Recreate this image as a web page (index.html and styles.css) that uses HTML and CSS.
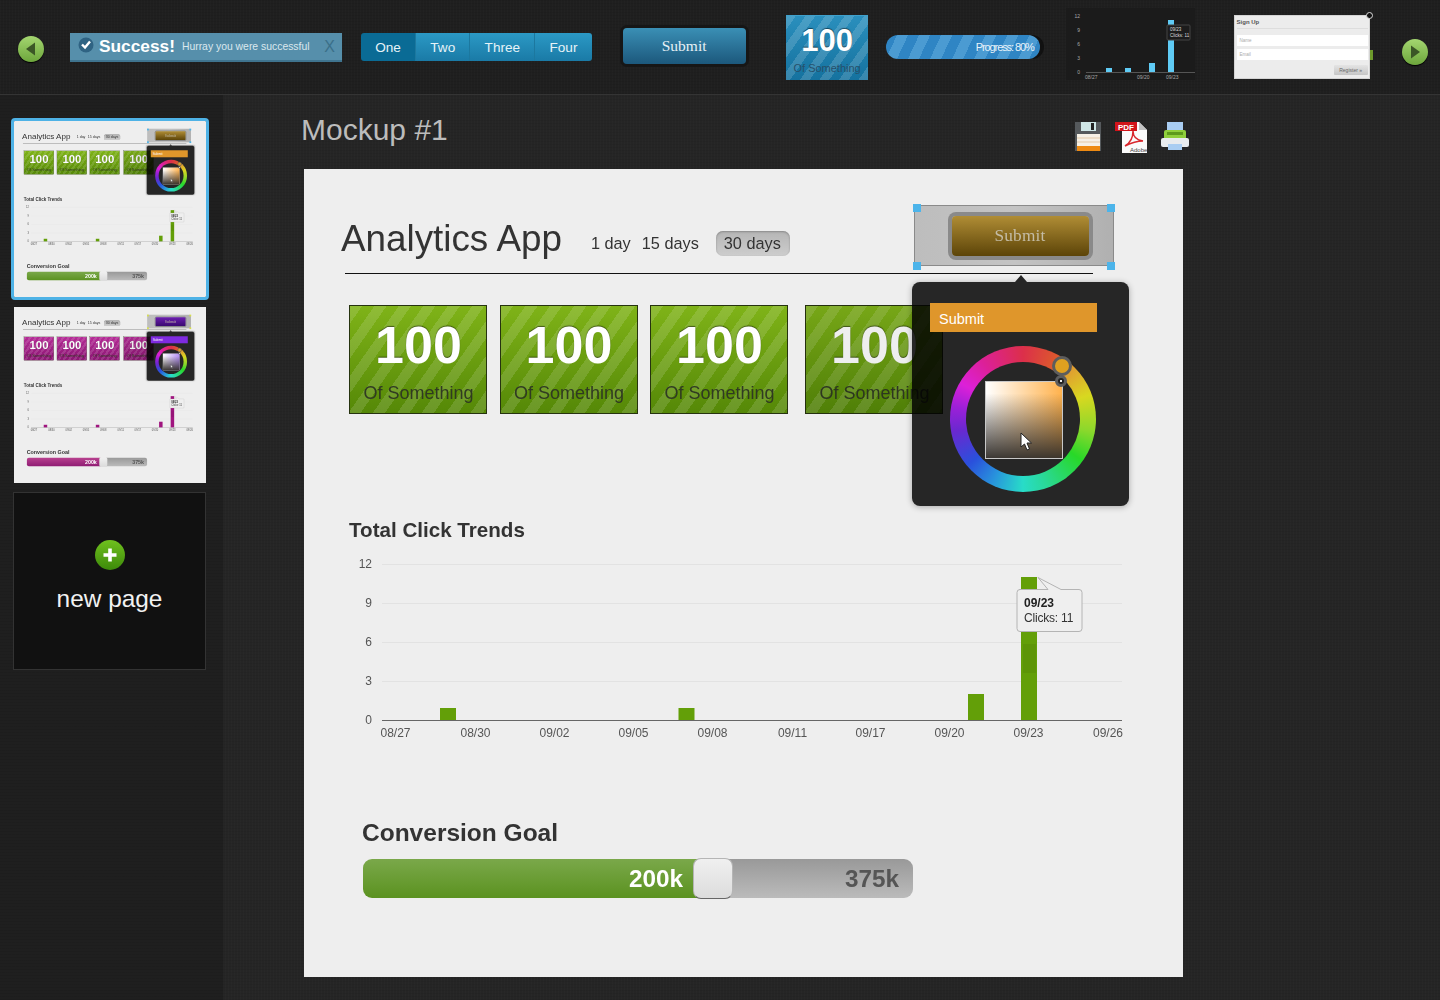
FILE: index.html
```html
<!DOCTYPE html>
<html lang="en">
<head>
    <meta charset="UTF-8">
    <meta name="viewport" content="width=device-width, initial-scale=1.0">
    <title>Mockup #1</title>
    <link rel="stylesheet" href="styles.css">
</head>
<body>
    <!-- Component strip -->
    <header class="topbar">
        <button class="nav-arrow nav-prev" aria-label="Previous">
            <svg width="26" height="26" viewBox="0 0 26 26"><path d="M17 6.5v13L8 13z" fill="#3b5626"/></svg>
        </button>

        <div class="alert">
            <svg class="alert-check" width="16" height="16" viewBox="0 0 16 16">
                <circle cx="8" cy="8" r="7.5" fill="#2f6383"/>
                <path d="M4 7.5l3 3 5-6" fill="none" stroke="#fff" stroke-width="2.4"/>
            </svg>
            <strong class="alert-title">Success!</strong>
            <span class="alert-text">Hurray you were successful</span>
            <span class="alert-close">X</span>
        </div>

        <div class="segmented">
            <span class="seg seg-active">One</span>
            <span class="seg">Two</span>
            <span class="seg">Three</span>
            <span class="seg">Four</span>
        </div>

        <button class="strip-submit">Submit</button>

        <div class="tile tile-blue">
            <div class="tile-num">100</div>
            <div class="tile-label">Of Something</div>
        </div>

        <div class="progress"><span>Progress: 80%</span></div>

        <svg class="mini-chart" width="129" height="72" viewBox="1065 8 129 72">
            <g class="mini-y">
                <text x="1079" y="18">12</text>
                <text x="1079" y="32">9</text>
                <text x="1079" y="46">6</text>
                <text x="1079" y="60">3</text>
                <text x="1079" y="74">0</text>
            </g>
            <path d="M1085 72.5h109" stroke="#555" fill="none"/>
            <path d="M1105 68h6v4h-6zM1124 68h6v4h-6zM1148 63h6v9h-6zM1167 20h6v52h-6z" fill="#5fcbf5"/>
            <rect x="1166" y="25" width="23" height="15" rx="1" fill="#1c1c1c" stroke="#444"/>
            <g class="mini-tip">
                <text x="1169" y="31">09/23</text>
                <text x="1169" y="37">Clicks: 11</text>
            </g>
            <g class="mini-x">
                <text x="1084" y="79">08/27</text>
                <text x="1136" y="79">09/20</text>
                <text x="1165" y="79">09/23</text>
            </g>
        </svg>

        <div class="signup">
            <div class="signup-title">Sign Up</div>
            <div class="signup-input">Name</div>
            <div class="signup-input">Email</div>
            <div class="signup-foot"><span class="signup-btn">Register »</span></div>
            <span class="signup-close"></span>
        </div>

        <button class="nav-arrow nav-next" aria-label="Next">
            <svg width="26" height="26" viewBox="0 0 26 26"><path d="M9 6.5v13l9-6.5z" fill="#3b5626"/></svg>
        </button>
    </header>

    <div class="workspace">
        <aside class="sidebar">
            <div class="thumb thumb-selected" data-theme="green"></div>
            <div class="thumb" data-theme="purple"></div>
            <div class="new-page">
                <svg width="30" height="30" viewBox="0 0 30 30">
                    <defs>
                        <linearGradient id="plusFill" x1="0" y1="0" x2="0" y2="1">
                            <stop offset="0" stop-color="#6fc01e"/>
                            <stop offset="1" stop-color="#3d8a0a"/>
                        </linearGradient>
                    </defs>
                    <circle cx="15" cy="15" r="15" fill="url(#plusFill)"/>
                    <path d="M15 8.5v13M8.5 15h13" stroke="#fff" stroke-width="3.6"/>
                </svg>
                <span>new page</span>
            </div>
        </aside>

        <main class="stage">
            <div class="stage-head">
                <h2 class="stage-title">Mockup #1</h2>
                <div class="stage-icons">
                    <!-- save -->
                    <svg width="28" height="30" viewBox="0 0 28 30">
                        <path d="M1 1h26v29H1z" fill="#55595c"/>
                        <path d="M7 1h15v9H7z" fill="#cfe6e6"/>
                        <path d="M17 2h3v7h-3z" fill="#222"/>
                        <path d="M3 13h23v17H3z" fill="#f6f0e6"/>
                        <path d="M3 17h23M3 21h23" stroke="#e3c9a8" fill="none"/>
                        <path d="M3 25h23v5H3z" fill="#ee8a12"/>
                    </svg>
                    <!-- pdf -->
                    <svg class="icon-pdf" width="34" height="33" viewBox="0 0 34 33">
                        <path d="M8 1h17l8 8v23H8z" fill="#fafafa"/>
                        <path d="M25 1v8h8z" fill="#c4c4c4"/>
                        <path d="M1 1h22v9H1z" fill="#d2141a"/>
                        <text class="pdf-label" x="4" y="8.5">PDF</text>
                        <path d="M11 25c5-3 8-9 8-15 0 6 3 9 10 10-6 0-12 2-18 5z" fill="none" stroke="#d8262c" stroke-width="1.5"/>
                        <text class="pdf-adobe" x="16" y="31">Adobe</text>
                    </svg>
                    <!-- print -->
                    <svg width="28" height="30" viewBox="0 0 28 30">
                        <path d="M6 1h16v12H6z" fill="#a9cdf2"/>
                        <rect x="3" y="9" width="22" height="11" rx="2" fill="#8fcf3c"/>
                        <path d="M6 11h16v3H6z" fill="#5d9a1d"/>
                        <rect x="0" y="17" width="28" height="9" rx="2" fill="#e8ebee"/>
                        <path d="M7 23h14v6H7z" fill="#a9cdf2"/>
                    </svg>
                </div>
            </div>

            <!-- Mockup page, app.js copies it into the sidebar thumbs -->
            <section class="page" id="page">
                <div class="page-head">
                    <h1 class="page-title">Analytics App</h1>
                    <nav class="ranges">
                        <span class="range">1 day</span>
                        <span class="range">15 days</span>
                        <span class="range range-active">30 days</span>
                    </nav>
                    <div class="selection">
                        <span class="handle handle-tl"></span>
                        <span class="handle handle-tr"></span>
                        <span class="handle handle-bl"></span>
                        <span class="handle handle-br"></span>
                        <button class="page-submit">Submit</button>
                    </div>
                </div>
                <div class="page-rule"></div>

                <div class="tiles">
                    <div class="tile"><div class="tile-num">100</div><div class="tile-label">Of Something</div></div>
                    <div class="tile"><div class="tile-num">100</div><div class="tile-label">Of Something</div></div>
                    <div class="tile"><div class="tile-num">100</div><div class="tile-label">Of Something</div></div>
                    <div class="tile tile-over"><div class="tile-num">100</div><div class="tile-label">Of Something</div></div>
                </div>

                <h3 class="chart-title">Total Click Trends</h3>
                <svg class="chart" width="879" height="200" viewBox="304 550 879 200">
                    <path d="M382 564.5h740M382 603.5h740M382 642.5h740M382 681.5h740" stroke="#e2e2e2" fill="none"/>
                    <g class="chart-y">
                        <text x="372" y="568">12</text>
                        <text x="372" y="607">9</text>
                        <text x="372" y="646">6</text>
                        <text x="372" y="685">3</text>
                        <text x="372" y="724">0</text>
                    </g>
                    <g class="chart-bars">
                        <rect x="440" y="708" width="16" height="12"/>
                        <rect x="678.500" y="708" width="16" height="12"/>
                        <rect x="968" y="694" width="16" height="26"/>
                        <rect x="1021" y="577" width="16" height="143"/>
                    </g>
                    <rect x="1023" y="644" width="13" height="29" fill="#000" opacity=".06"/>
                    <path d="M382 720.5h740" stroke="#666" fill="none"/>
                    <g class="chart-x">
                        <text x="395.500" y="737">08/27</text>
                        <text x="475.500" y="737">08/30</text>
                        <text x="554.500" y="737">09/02</text>
                        <text x="633.500" y="737">09/05</text>
                        <text x="712.500" y="737">09/08</text>
                        <text x="792.500" y="737">09/11</text>
                        <text x="870.500" y="737">09/17</text>
                        <text x="949.500" y="737">09/20</text>
                        <text x="1028.500" y="737">09/23</text>
                        <text x="1108" y="737">09/26</text>
                    </g>
                    <path class="chart-tip" d="M1019.5 589.5h28.500l-10-12 23 12h18a3 3 0 0 1 3 3v36a3 3 0 0 1-3 3h-59a3 3 0 0 1-3-3v-36a3 3 0 0 1 3-3z"/>
                    <text class="tip-date" x="1024" y="607">09/23</text>
                    <text class="tip-value" x="1024" y="622">Clicks: 11</text>
                </svg>

                <h3 class="goal-title">Conversion Goal</h3>
                <div class="slider">
                    <div class="slider-fill">200k</div>
                    <div class="slider-knob"></div>
                    <div class="slider-rest">375k</div>
                </div>

                <div class="popover">
                    <div class="pop-field">Submit</div>
                    <div class="wheel">
                        <div class="wheel-box">
                            <svg class="wheel-cursor" width="13" height="20" viewBox="0 0 13 20">
                                <path d="M1 1v14l3.5-3 2.500 6 2.500-1-2.500-6h4.500z" fill="#fff" stroke="#222"/>
                            </svg>
                        </div>
                        <span class="wheel-hue"></span>
                        <span class="wheel-pick"></span>
                    </div>
                </div>
            </section>
        </main>
    </div>

    <script src="app.js"></script>
</body>
</html>
```

FILE: styles.css
```css
* {
    box-sizing: border-box;
}

html, body {
    margin: 0;
    height: 1000px;
    overflow: hidden;
}

body {
    font-family: "Liberation Sans", Arial, sans-serif;
    background-color: #252525;
    background-image:
        repeating-linear-gradient(0deg, rgba(0, 0, 0, 0.05) 0 1px, transparent 1px 3px),
        repeating-linear-gradient(90deg, rgba(255, 255, 255, 0.012) 0 1px, transparent 1px 3px);
}

button {
    font-family: inherit;
    border: 0;
    padding: 0;
    cursor: pointer;
}

/* ---------- Top strip ---------- */
.topbar {
    display: flex;
    align-items: center;
    height: 95px;
    padding-left: 18px;
    background-color: #1f1f1f;
    background-image:
        repeating-linear-gradient(0deg, rgba(0, 0, 0, 0.06) 0 1px, transparent 1px 3px),
        repeating-linear-gradient(90deg, rgba(255, 255, 255, 0.01) 0 1px, transparent 1px 3px);
    border-bottom: 1px solid #343434;
}

.nav-arrow {
    display: block;
    width: 26px;
    height: 26px;
    border-radius: 50%;
    background: linear-gradient(#a4d670, #6da63c);
    box-shadow: 0 1px 1px #000;
}

.nav-prev {
    margin-top: 3px;
}

.nav-next {
    margin-left: 32px;
    margin-top: 10px;
}

.alert {
    display: flex;
    align-items: center;
    width: 272px;
    height: 29px;
    margin-left: 26px;
    padding: 0 6px 0 8px;
    background-color: #568fab;
    border-bottom: 2px solid #3f748f;
}

.alert-check {
    margin-top: -3px;
}

.alert-title {
    margin-left: 5px;
    font-size: 17.3px;
    color: #fff;
}

.alert-text {
    margin-left: 7px;
    font-size: 10.4px;
    color: #dbe8ee;
}

.alert-close {
    margin-left: auto;
    margin-right: 1px;
    margin-top: 2px;
    font-size: 16px;
    color: #3b6f89;
}

.segmented {
    display: flex;
    height: 28px;
    margin-left: 19px;
    border-radius: 3px;
    overflow: hidden;
}

.seg {
    display: flex;
    align-items: center;
    padding: 0 14.2px;
    font-size: 13.6px;
    color: #e6f3f8;
    background: linear-gradient(#2b99c5, #1a7aa6);
    border-left: 1px solid #1c789f;
}

.seg-active {
    background: #0a6b95;
    border-left: 0;
}

.strip-submit {
    width: 123px;
    height: 36px;
    margin-left: 31px;
    margin-top: -3px;
    border-radius: 4px;
    font-family: "Liberation Serif", Georgia, serif;
    font-size: 15.5px;
    color: #e6f0f5;
    background: linear-gradient(#3a8fb5, #1c587c);
    box-shadow: 0 0 0 3px #161616;
}

.progress {
    display: flex;
    align-items: center;
    justify-content: flex-end;
    width: 154px;
    height: 24px;
    margin-left: 18px;
    padding-right: 6px;
    border-radius: 12px;
    font-size: 11px;
    letter-spacing: -1.1px;
    color: #e8f3fa;
    background: repeating-linear-gradient(115deg, #2f85c4 0 10px, #4b9bd2 10px 20px);
    box-shadow: 4px 0 0 #111;
}

.mini-chart {
    display: block;
    margin-left: 26px;
    margin-top: -7px;
    background: #1b1b1b;
}

.mini-chart text {
    font-size: 5px;
    fill: #a8a8a8;
}

.mini-y text {
    text-anchor: end;
}

.mini-tip text {
    font-size: 4.500px;
    fill: #ddd;
}

.signup {
    position: relative;
    width: 136px;
    height: 64px;
    margin-left: 39px;
    padding: 0 2px 0 3px;
    background: #ececec;
    box-shadow: inset 0 0 0 1px #d4d4d4;
}

/* bit of the widget behind the popup */
.signup::after {
    content: '';
    position: absolute;
    right: -3px;
    top: 35px;
    width: 3px;
    height: 10px;
    background: #6d9a2c;
}

.signup-title {
    height: 14px;
    margin-bottom: 6px;
    padding-top: 4px;
    font-size: 6px;
    font-weight: bold;
    color: #555;
    border-bottom: 1px solid #ddd;
}

.signup-input {
    height: 11px;
    margin-bottom: 3px;
    padding: 3px 0 0 3px;
    background: #fff;
    font-size: 4.500px;
    color: #aaa;
}

.signup-foot {
    display: flex;
    justify-content: flex-end;
    padding-top: 2px;
}

.signup-btn {
    width: 34px;
    height: 10px;
    font-size: 5px;
    line-height: 10px;
    text-align: center;
    color: #666;
    background: linear-gradient(#e4e4e4, #c6c6c6);
    border-radius: 1px;
}

.signup-close {
    position: absolute;
    right: -3px;
    top: -3px;
    width: 7px;
    height: 7px;
    border-radius: 50%;
    background: #111;
    border: 1px solid #ddd;
}

/* ---------- Tiles ---------- */
.tile {
    --tile-top: var(--accent-top, #7fb318);
    --tile-bottom: var(--accent-bottom, #558807);
    width: 138px;
    height: 109px;
    padding: 9px 0 0 1px;
    text-align: center;
    border: 1px solid #26330f;
    background:
        repeating-linear-gradient(125deg, rgba(255, 255, 255, 0.13) 0 10px, transparent 10px 20px),
        linear-gradient(var(--tile-top), var(--tile-bottom));
}

.tile-num {
    font-size: 52px;
    line-height: 60px;
    font-weight: bold;
    color: #fff;
    text-shadow: 0 -1px 1px rgba(0, 0, 0, 0.5);
}

.tile-label {
    margin-top: 7px;
    font-size: 18px;
    line-height: 22px;
    color: #303a22;
}

.tile-blue {
    --tile-top: #2a8fbd;
    --tile-bottom: #15729f;
    width: 82px;
    height: 65px;
    margin-left: 40px;
    padding-top: 5px;
    border: 0;
    border-top: 1px solid #3fa0cb;
    background:
        repeating-linear-gradient(125deg, rgba(255, 255, 255, 0.15) 0 8px, transparent 8px 16px),
        linear-gradient(var(--tile-top), var(--tile-bottom));
}

.tile-blue .tile-num {
    font-size: 31px;
    line-height: 40px;
}

.tile-blue .tile-label {
    margin-top: 1px;
    font-size: 11px;
    line-height: 13px;
    color: #27506a;
}

/* ---------- Workspace ---------- */
.workspace {
    display: flex;
}

.sidebar {
    width: 223px;
    height: 905px;
    padding: 23px 0 0 11px;
    background-color: #1f1f1f;
    background-image: repeating-linear-gradient(0deg, rgba(0, 0, 0, 0.06) 0 1px, transparent 1px 3px);
}

.thumb {
    position: relative;
    width: 192px;
    height: 176px;
    margin: 0 0 9px 3px;
    overflow: hidden;
}

.thumb-selected {
    width: 198px;
    height: 182px;
    margin-left: 0;
    margin-bottom: 7px;
    border: 3px solid #4eb2e6;
    border-radius: 4px;
}

.thumb .page {
    transform: scale(0.2185);
    transform-origin: 0 0;
}

.new-page {
    display: flex;
    flex-direction: column;
    align-items: center;
    width: 193px;
    height: 178px;
    margin-left: 2px;
    padding-top: 47px;
    background: #111;
    border: 1px solid #333;
}

.new-page span {
    margin-top: 14px;
    font-size: 24.4px;
    line-height: 30px;
    color: #f2f2f2;
}

.stage {
    flex: 1;
    padding-left: 81px;
}

.stage-head {
    display: flex;
    justify-content: space-between;
    width: 885px;
    height: 74px;
}

.stage-title {
    margin: 17px 0 0 -3px;
    font-size: 30px;
    line-height: 36px;
    font-weight: normal;
    color: #bcbcbc;
}

.stage-icons {
    display: flex;
    gap: 12px;
    padding-top: 26px;
}

.icon-pdf {
    margin-right: 1px;
}

.pdf-label {
    font-size: 8px;
    font-weight: bold;
    fill: #fff;
}

.pdf-adobe {
    font-size: 6px;
    fill: #444;
}

/* ---------- Mockup page ---------- */
.page {
    --accent-top: #7fb318;
    --accent-bottom: #558807;
    --bar: #639f08;
    --btn-top: #b08d35;
    --btn-bottom: #5c4408;
    --field: #df962b;
    --fill-top: #7aa84a;
    --fill-bottom: #5b9220;
    --handle: #4cb4ea;
    --box-corner: #ffb24d;
    position: relative;
    isolation: isolate;
    width: 879px;
    height: 808px;
    padding-top: 36px;
    background: #eee;
    color: #333;
}

.theme-purple {
    --accent-top: #b52c97;
    --accent-bottom: #8a1672;
    --bar: #a0157f;
    --btn-top: #6c1fb0;
    --btn-bottom: #3a0a70;
    --field: #7f2be0;
    --fill-top: #b8418f;
    --fill-bottom: #8f1c73;
    --handle: #d8e04a;
    --box-corner: #b18cf2;
}

.page-head {
    display: flex;
    align-items: flex-start;
    height: 61px;
    padding-left: 37px;
}

.page-title {
    margin: 12px 0 0;
    font-size: 36.800px;
    line-height: 44px;
    font-weight: normal;
}

.ranges {
    display: flex;
    align-items: center;
    height: 25px;
    margin: 26px 0 0 29px;
    font-size: 16.300px;
}

.range {
    margin-right: 11px;
    white-space: nowrap;
}

.range-active {
    margin-left: 6px;
    padding: 4px 9px 4px 8px;
    line-height: 17px;
    border-radius: 7px;
    background: linear-gradient(#b5b5b5, #cdcdcd);
    box-shadow: inset 0 1px 2px #8a8a8a;
}

.selection {
    position: relative;
    display: flex;
    align-items: center;
    justify-content: center;
    width: 200px;
    height: 61px;
    margin-left: auto;
    margin-right: 69px;
    padding-left: 12px;
    border: 1px solid #8a8a8a;
    background: linear-gradient(90deg, #bdbdbd, #c4c4c4 50%, #b0b0b0);
}

.handle {
    position: absolute;
    width: 8px;
    height: 8px;
    background: var(--handle);
}

.handle-tl { left: -2px; top: -2px; }
.handle-tr { right: -2px; top: -2px; }
.handle-bl { left: -2px; bottom: -5px; }
.handle-br { right: -2px; bottom: -5px; }

.page-submit {
    width: 137px;
    height: 40px;
    border-radius: 4px;
    font-family: "Liberation Serif", Georgia, serif;
    font-size: 17.300px;
    letter-spacing: 0.2px;
    color: #c4bca6;
    background: linear-gradient(var(--btn-top), var(--btn-bottom));
    box-shadow: 0 0 0 4px #8a8a8a;
}

.page-rule {
    width: 748px;
    margin: 7px 0 0 41px;
    border-top: 1px solid #111;
}

.tiles {
    display: flex;
    gap: 12.500px;
    margin: 31px 0 0 45px;
}

.tile-over {
    position: relative;
    z-index: 2;
    margin-left: 4.500px;
    mix-blend-mode: multiply;
}

.chart-title {
    margin: 104px 0 0 45px;
    font-size: 20.600px;
    line-height: 24px;
}

.chart {
    display: block;
    margin-top: 8px;
}

.chart text {
    font-size: 12px;
    fill: #555;
}

.chart-y text {
    text-anchor: end;
}

.chart-x text {
    text-anchor: middle;
}

.chart-bars rect {
    fill: var(--bar);
}

.chart-tip {
    fill: #efefef;
    stroke: #b4b4b4;
}

.chart .tip-date {
    font-weight: bold;
    fill: #222;
}

.chart .tip-value {
    fill: #333;
    letter-spacing: -0.2px;
}

.goal-title {
    margin: 69px 0 0 58px;
    font-size: 24.500px;
    line-height: 28px;
}

.slider {
    display: flex;
    width: 550px;
    height: 39px;
    margin: 12px 0 0 59px;
    font-size: 24.300px;
    line-height: 39px;
    font-weight: bold;
}

.slider-fill {
    width: 336px;
    padding-right: 16px;
    text-align: right;
    color: #fff;
    border-radius: 9px 0 0 9px;
    background: linear-gradient(var(--fill-top), var(--fill-bottom));
}

.slider-knob {
    position: relative;
    flex: none;
    width: 40px;
    height: 41px;
    margin: -1px -6px 0;
    border-radius: 8px;
    background: linear-gradient(#f0f0f0, #dcdcdc);
    border: 1px solid #b5b5b5;
    border-bottom-color: #666;
}

.slider-rest {
    flex: 1;
    padding-right: 14px;
    text-align: right;
    color: #555;
    border-radius: 0 9px 9px 0;
    background: linear-gradient(#999, #bbb);
}

/* ---------- Colour picker popover ---------- */
.popover {
    position: absolute;
    left: 608px;
    top: 113px;
    width: 217px;
    height: 224px;
    padding: 21px 0 0 18px;
    border-radius: 8px;
    background: #262626;
    box-shadow: 0 1px 6px rgba(0, 0, 0, 0.3);
}

.popover::before {
    content: '';
    position: absolute;
    left: 103px;
    top: -7px;
    border: 6px solid transparent;
    border-top: 0;
    border-bottom: 7px solid #262626;
}

.pop-field {
    position: relative;
    z-index: 3;
    width: 167px;
    height: 29px;
    padding-left: 9px;
    font-size: 14.500px;
    line-height: 32px;
    color: #fff;
    background: var(--field);
}

.wheel {
    position: relative;
    width: 146px;
    height: 146px;
    margin: 14px 0 0 20px;
    border-radius: 50%;
    background: conic-gradient(#dc2f4a, #dc5a2c 30deg, #e0a030 45deg, #d8d820 70deg, #8cd82c 100deg, #28d828 125deg, #2ad896 160deg, #28dcc8 180deg, #2896dc 205deg, #2a50dc 230deg, #6a28d0 260deg, #9c20d8 280deg, #dc20d8 300deg, #dc2098 325deg, #dc2f4a);
}

.wheel::before {
    content: '';
    position: absolute;
    inset: 16px;
    border-radius: 50%;
    background: #262626;
}

.wheel-box {
    position: absolute;
    left: 35px;
    top: 35px;
    width: 78px;
    height: 78px;
    border: 1px solid #c8c8c8;
    background:
        linear-gradient(transparent 15%, rgba(50, 46, 42, 0.95)),
        linear-gradient(90deg, #fff, var(--box-corner));
}

.wheel-cursor {
    position: absolute;
    left: 34px;
    top: 50px;
}

.wheel-hue {
    position: absolute;
    left: 102px;
    top: 10px;
    width: 20px;
    height: 20px;
    border-radius: 50%;
    background: #dfa020;
    border: 3px solid #5d5d5d;
}

.wheel-pick {
    position: absolute;
    left: 105px;
    top: 29px;
    width: 12px;
    height: 12px;
    border-radius: 50%;
    background: radial-gradient(#eee 0 1px, #222 1.5px);
    border: 3px solid #5d5d5d;
}
```

FILE: app.js
```js
// Copy the mockup page into each sidebar thumbnail
document.addEventListener('DOMContentLoaded', function() {
    const page = document.getElementById('page');

    document.querySelectorAll('.thumb').forEach(function(thumb) {
        const copy = page.cloneNode(true);
        copy.removeAttribute('id');
        if (thumb.dataset.theme === 'purple') {
            copy.classList.add('theme-purple');
        }
        thumb.appendChild(copy);
    });
});
```
